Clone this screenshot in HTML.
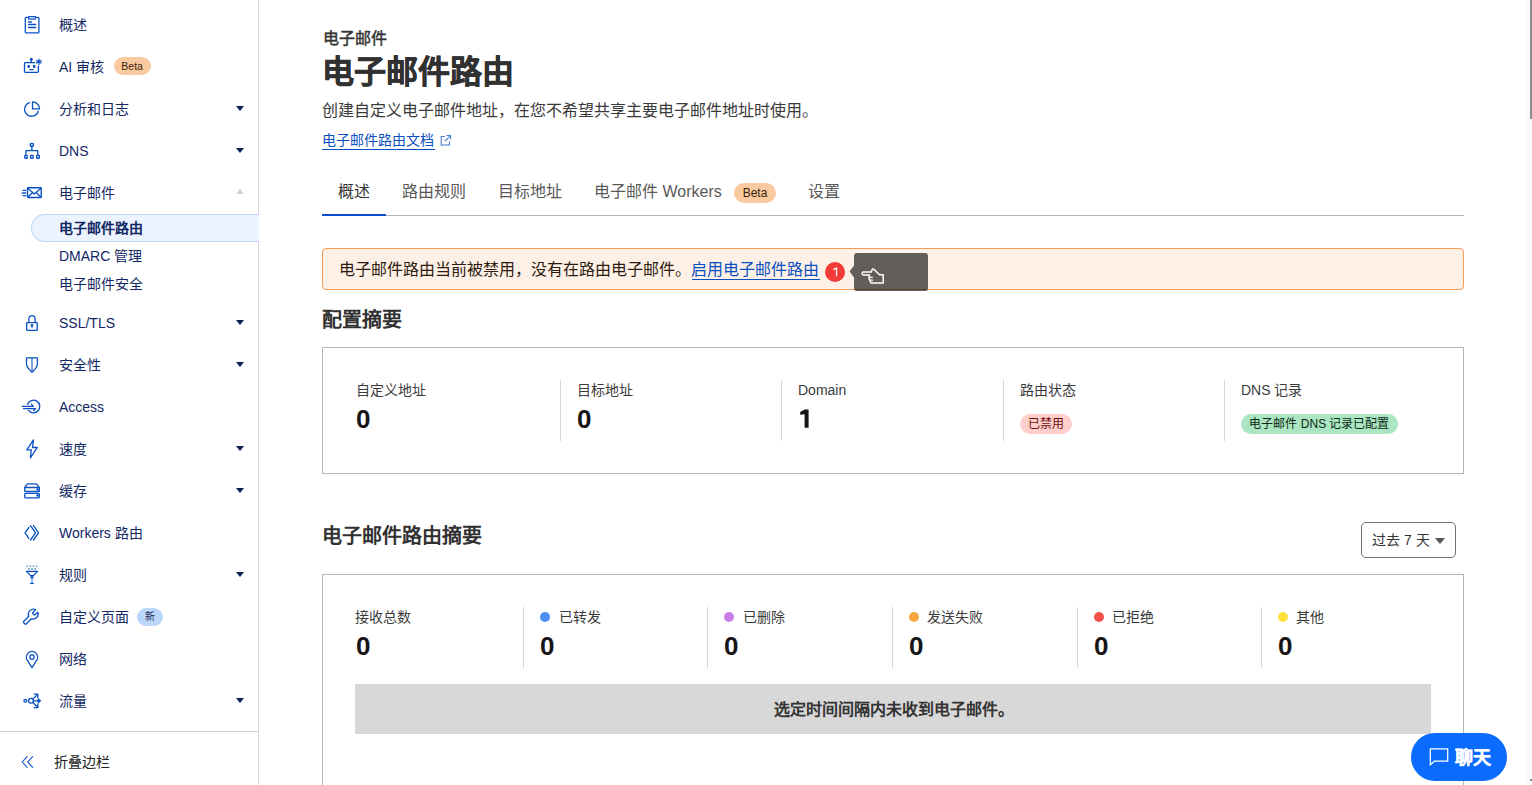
<!DOCTYPE html>
<html lang="zh-CN">
<head>
<meta charset="utf-8">
<style>
*{box-sizing:border-box;margin:0;padding:0}
html,body{width:1532px;height:785px;overflow:hidden;background:#fff}
body{font-family:"Liberation Sans",sans-serif;color:#313131;position:relative}
.abs{position:absolute}
#sb{position:absolute;left:0;top:0;width:259px;height:785px;border-right:1px solid #d9d9d9;background:#fff}
.it{position:absolute;left:0;width:258px;height:28px;line-height:28px;font-size:14px;color:#112863}
.it .ic{position:absolute;left:23px;top:5px;width:18px;height:18px}
.it .tx{position:absolute;left:59px;top:1px;white-space:nowrap}
.it .car{position:absolute;left:236px;top:12px;width:0;height:0;border-left:4.5px solid transparent;border-right:4.5px solid transparent;border-top:5px solid #0e2050}
.sub{position:absolute;left:59px;font-size:14px;color:#112863;line-height:30px;height:28px;white-space:nowrap}
.badge{display:inline-block;font-size:10.5px;line-height:18px;height:18px;padding:0 8px;border-radius:9px;vertical-align:2px;margin-left:8px;text-align:center}
#main{position:absolute;left:259px;top:0;width:1268px;height:785px}

.t{position:absolute;white-space:nowrap;line-height:1}
.tab{position:absolute;top:184px;font-size:16px;color:#595959;white-space:nowrap;line-height:16px}
.box{position:absolute;left:322px;width:1142px;border:1px solid #b6b6b6;background:#fff}
.lbl{position:absolute;font-size:14px;color:#3b3b3b;white-space:nowrap;line-height:14px}
.val{position:absolute;font-size:26px;font-weight:bold;color:#151515;line-height:26px}
.dv{position:absolute;width:1px;background:#d6d6d6}
.dot{position:absolute;width:10px;height:10px;border-radius:50%}
</style>
</head>
<body>
<div id="sb">
<svg class="abs" style="left:0;top:0" width="60" height="785" viewBox="0 0 60 785" fill="none" stroke="#0a52c4" stroke-width="1.3" stroke-linecap="round" stroke-linejoin="round">
<g transform="translate(18,7)">
 <path d="M10.4 10.3H8.2a0.9 0.9 0 0 0-0.9 0.9V25a0.9 0.9 0 0 0 0.9 0.9H20a0.9 0.9 0 0 0 0.9-0.9V11.2a0.9 0.9 0 0 0-0.9-0.9H17.7"/>
 <rect x="10.6" y="9.6" width="6.9" height="2.5" rx="0.6"/>
 <path d="M10.6 15.1H13.4M10.6 17.6H17.6M10.6 20.4H17.6" stroke-width="1.5"/>
</g>
<g transform="translate(18,50)">
 <path d="M16.6 12.6H7.3a0.8 0.8 0 0 0-0.8 0.8V21.6a0.8 0.8 0 0 0 0.8 0.8H19.6a0.8 0.8 0 0 0 0.8-0.8V16.2"/>
 <path d="M13.3 9.8V12.4"/><circle cx="13.3" cy="9.2" r="0.9" fill="#0a52c4"/>
 <circle cx="10.7" cy="16.5" r="0.8" fill="#0a52c4"/><circle cx="16.2" cy="16.5" r="0.8" fill="#0a52c4"/>
 <path d="M11.8 19.6H15.2" stroke-width="1.2"/>
 <path d="M20.9 9.2V14.4M18.6 10.6L23.2 13M18.6 13L23.2 10.6" stroke-width="1.2"/>
</g>
<g transform="translate(18,92)">
 <path d="M11.6 10.7A6.9 6.9 0 1 0 20.2 19.2"/>
 <path d="M14.5 9.9V16.9H21.5A7 7 0 0 0 14.5 9.9Z"/>
</g>
<g transform="translate(18,135)">
 <rect x="12.3" y="8.65" width="3.1" height="2.6" rx="0.4"/>
 <path d="M13.85 11.3V15.7M7.9 19.6V15.7H19.8V19.6"/>
 <rect x="6.75" y="20.35" width="2.5" height="2.9" rx="0.4"/>
 <rect x="12.5" y="20.35" width="2.7" height="2.9" rx="0.4"/>
 <rect x="18.65" y="20.35" width="2.7" height="2.9" rx="0.4"/>
</g>
<g transform="translate(18,177)">
 <rect x="9.5" y="10.8" width="13.7" height="9.7" rx="0.4" stroke-width="1.4"/>
 <path d="M9.8 11.2L16.3 17L22.9 11.2M9.8 20.2L14 16M22.9 20.2L18.7 16"/>
 <path d="M5.1 13.4H7.6M4.3 16H7.6M5.1 18.6H7.6"/>
</g>
<g transform="translate(18,307)">
 <rect x="8.65" y="15.55" width="10.6" height="7.9" rx="0.5"/>
 <path d="M10.8 15.3V11.8a3.15 3.15 0 0 1 6.3 0V15.3"/>
 <circle cx="14" cy="18.4" r="0.7" fill="#0a52c4"/><path d="M14 18.6V20.6" stroke-opacity="0.7"/>
</g>
<g transform="translate(18,349)">
 <path d="M8.5 8.8H19.4V14.6C19.4 18 17 20.8 14 23.2C11 20.8 8.5 18 8.5 14.6Z"/>
 <path d="M14 8.8V23" stroke-opacity="0.8"/>
</g>
<g transform="translate(18,391)">
 <path d="M9.6 13.3A6.3 6.3 0 1 1 10.4 19.2"/>
 <path d="M4.3 15.4H15.2L13.5 13.3M5.5 17.6H17.6L15.6 19.5"/>
</g>
<g transform="translate(18,433)">
 <path d="M15.5 6.8L8.8 16.8H13.3L12.4 24.9L19.3 14.5H14.5Z"/>
</g>
<g transform="translate(18,475)">
 <path d="M6.75 12.5L9.4 8.85H18.4L21.3 12.5"/>
 <rect x="6.75" y="12.5" width="14.6" height="4" rx="0.6"/>
 <rect x="6.75" y="18.3" width="14.6" height="4.6" rx="0.9"/>
 <circle cx="19.5" cy="14.5" r="0.6" fill="#0a52c4"/><circle cx="19.5" cy="20.5" r="0.6" fill="#0a52c4"/>
</g>
<g transform="translate(18,517)">
 <path d="M10.9 10.5L7 15.8L10.9 21.3M12.5 8.6L17.6 15.8L12.5 23M15.5 8.6L20.6 15.8L15.5 23"/>
</g>
<g transform="translate(18,559)">
 <path d="M9.2 7.1h0.1M12.3 7.1h0.1M15.5 7.1h0.1M18.7 7.1h0.1" stroke-width="1.4"/>
 <path d="M10.9 9.4V10.6M14 9.4V10.6M17.2 9.4V10.6" stroke-width="1.7" stroke-linecap="butt"/>
 <path d="M8.4 12.4H19.6L15.4 16.6H12.6Z"/><rect x="12.5" y="16.4" width="3" height="3.2" fill="#0a52c4" stroke="none" opacity="0.85"/>
 <path d="M14 19.5V23.6" stroke-opacity="0.6"/><path d="M12.6 24.3H15.3" stroke-width="1.3"/>
</g>
<g transform="translate(18,601)">
 <path d="M17.6 8.6A5.1 5.1 0 0 0 10.8 15.3L5.6 20.5a0.8 0.8 0 0 0 0 1.1L7 23a0.8 0.8 0 0 0 1.1 0L13.3 17.8A5.1 5.1 0 0 0 19.8 11.2L16.6 14.1L14.5 12Z"/>
</g>
<g transform="translate(18,643)">
 <path d="M14 24.6L9.4 17.3A5.6 5.6 0 1 1 18.6 17.3Z"/>
 <circle cx="14" cy="14" r="2.2"/>
</g>
<g transform="translate(18,685)">
 <circle cx="7.3" cy="15.8" r="1.4"/>
 <circle cx="13" cy="15.8" r="2.4"/>
 <path d="M15.4 15.8H20.8"/>
 <path d="M20.2 13.9L22.4 15.8L20.2 17.7Z" fill="#0a52c4"/>
 <path d="M15.2 13.8L19.4 9.6M16.2 9.2H19.8V12.6M15.2 17.8L19.4 22M16.2 22.6H19.8V19.2"/>
</g>
<g transform="translate(0,0)">
 <path d="M27.1 756.6L22.2 762L27.1 767.4M32.6 756.6L27.7 762L32.6 767.4" stroke-width="1.1"/>
</g>
</svg>
  <div class="it" style="top:10px"><span class="tx">概述</span></div>
  <div class="it" style="top:52px"><span class="tx">AI 审核<span class="badge" style="background:#f9c9a0;color:#3a1f0a;width:37px;padding:0;margin-left:9.5px">Beta</span></span></div>
  <div class="it" style="top:94px"><span class="tx">分析和日志</span><i class="car"></i></div>
  <div class="it" style="top:136px"><span class="tx">DNS</span><i class="car"></i></div>
  <div class="it" style="top:178px"><span class="tx">电子邮件</span><i class="car" style="border-top:0;border-bottom:5px solid #c9d3e3;top:11px"></i></div>
  <div class="abs" style="left:31px;top:214px;width:228px;height:28px;background:#ebf3fe;border:1px solid #b9d7fb;border-right:0;border-radius:14px 0 0 14px"></div>
  <div class="sub" style="top:213px;font-weight:bold">电子邮件路由</div>
  <div class="sub" style="top:241px">DMARC 管理</div>
  <div class="sub" style="top:269px">电子邮件安全</div>
  <div class="it" style="top:308px"><span class="tx">SSL/TLS</span><i class="car"></i></div>
  <div class="it" style="top:350px"><span class="tx">安全性</span><i class="car"></i></div>
  <div class="it" style="top:392px"><span class="tx">Access</span></div>
  <div class="it" style="top:434px"><span class="tx">速度</span><i class="car"></i></div>
  <div class="it" style="top:476px"><span class="tx">缓存</span><i class="car"></i></div>
  <div class="it" style="top:518px"><span class="tx">Workers 路由</span></div>
  <div class="it" style="top:560px"><span class="tx">规则</span><i class="car"></i></div>
  <div class="it" style="top:602px"><span class="tx">自定义页面<span class="badge" style="background:#bcd6fb;color:#1d2a52;width:26px;padding:0;font-size:10px;margin-left:7.5px">新</span></span></div>
  <div class="it" style="top:644px"><span class="tx">网络</span></div>
  <div class="it" style="top:686px"><span class="tx">流量</span><i class="car"></i></div>
  <div class="abs" style="left:0;top:731px;width:258px;height:1px;background:#d0d0d0"></div>
  <div class="it" style="top:747px"><span class="tx" style="left:54px;color:#222">折叠边栏</span></div>
</div>
<div id="mainc">
<div class="t" style="left:323px;top:31px;font-size:16px;font-weight:500;color:#333;-webkit-text-stroke:0.45px #333">电子邮件</div>
<div class="t" style="left:322px;top:56px;font-size:32px;font-weight:bold;color:#313131;-webkit-text-stroke:0.6px #313131">电子邮件路由</div>
<div class="t" style="left:322px;top:103px;font-size:16px;color:#3a3a3a">创建自定义电子邮件地址，在您不希望共享主要电子邮件地址时使用。</div>
<div class="t" style="left:322px;top:133px;font-size:14px;color:#0a4fc0;line-height:14px">电子邮件路由文档</div>
<div class="abs" style="left:322px;top:149px;width:113px;height:1px;background:#0a4fc0"></div>
<svg class="abs" style="left:439px;top:134px" width="13" height="13" viewBox="0 0 13 13" fill="none" stroke="#4a7fd0" stroke-width="1.1"><path d="M6 2.5H2.2V11H10.5V7.2M7.5 1.5H11.5V5.5M11.2 1.8L6 7"/></svg>

<div class="tab" style="left:338px;color:#333">概述</div>
<div class="tab" style="left:402px">路由规则</div>
<div class="tab" style="left:498px">目标地址</div>
<div class="tab" style="left:594px">电子邮件 Workers</div>
<div class="abs" style="left:734px;top:183px;width:42px;height:20px;border-radius:10px;background:#f9c9a0;color:#3a1f0a;font-size:12px;line-height:20px;text-align:center">Beta</div>
<div class="tab" style="left:808px">设置</div>
<div class="abs" style="left:322px;top:215px;width:1142px;height:1px;background:#b3b3b3"></div>
<div class="abs" style="left:322px;top:214px;width:64px;height:2px;background:#0a4fcf"></div>

<div class="abs" style="left:322px;top:248px;width:1142px;height:42px;border:1px solid #f69c55;border-radius:4px;background:#fdf1e7"></div>
<div class="t" style="left:339px;top:262px;font-size:16px;color:#2e1a0c">电子邮件路由当前被禁用，没有在路由电子邮件。<span style="color:#0a4fc0">启用电子邮件路由</span></div>
<div class="abs" style="left:692px;top:279px;width:128px;height:1px;background:#0a4fc0"></div>
<div class="abs" style="left:825px;top:262px;width:20px;height:20px;border-radius:50%;background:#f23a37"></div><svg class="abs" style="left:825px;top:262px" width="20" height="20" viewBox="0 0 20 20"><path d="M10.9 5.4H12.2V14.2H10.9V7.2L8.3 8.2V6.9Z" fill="#fff"/></svg>
<div class="abs" style="left:854px;top:253px;width:74px;height:38px;border-radius:3px;background:rgba(0,0,0,0.61)"></div>
<svg class="abs" style="left:849px;top:265px" width="5" height="13" viewBox="0 0 5 13"><path d="M5 0.5L0.6 6.5L5 12.5Z" fill="rgba(0,0,0,0.61)"/></svg>
<svg class="abs" style="left:855px;top:260px" width="40" height="30" viewBox="0 0 40 30" fill="none" stroke="#fff" stroke-width="1.5" stroke-linejoin="round" stroke-linecap="round"><path d="M16.3 12.1H8.5a1.4 1.4 0 0 0 0 2.8H14.5L14 18.4L15.7 22.5L16.5 23.1H28.2V14.8H24.5L18.9 9.3a1.1 1.1 0 0 0-1.7 0.2Z"/><path d="M14.6 17.3H17.3M15.5 20.2H17.5" stroke-width="1.2"/></svg>

<div class="t" style="left:322px;top:310px;font-size:20px;font-weight:bold;color:#313131">配置摘要</div>
<div class="box" style="top:347px;height:127px"></div>
<div class="lbl" style="left:356px;top:383px">自定义地址</div>
<div class="val" style="left:356px;top:406px">0</div>
<div class="dv" style="left:560px;top:380px;height:61px"></div>
<div class="lbl" style="left:577px;top:383px">目标地址</div>
<div class="val" style="left:577px;top:406px">0</div>
<div class="dv" style="left:781px;top:380px;height:61px"></div>
<div class="lbl" style="left:798px;top:383px">Domain</div>
<svg class="abs" style="left:795px;top:405px" width="20" height="27" viewBox="0 0 20 27"><path d="M9.6 4.5H13.6V22.7H9.6V9.2L5.2 9.7V6.9L9.3 4.7Z" fill="#151515"/></svg>
<div class="dv" style="left:1003px;top:380px;height:61px"></div>
<div class="lbl" style="left:1020px;top:383px">路由状态</div>
<div class="abs" style="left:1020px;top:414px;width:52px;height:20px;border-radius:10px;background:#fecfcb;color:#6b0e0e;font-size:12px;line-height:20px;text-align:center">已禁用</div>
<div class="dv" style="left:1224px;top:380px;height:61px"></div>
<div class="lbl" style="left:1241px;top:383px">DNS 记录</div>
<div class="abs" style="left:1241px;top:414px;width:157px;height:20px;border-radius:10px;background:#abe5c1;color:#0c2a17;font-size:12px;line-height:20px;text-align:center;white-space:nowrap">电子邮件 DNS 记录已配置</div>

<div class="t" style="left:322px;top:526px;font-size:20px;font-weight:bold;color:#313131">电子邮件路由摘要</div>
<div class="abs" style="left:1361px;top:522px;width:95px;height:36px;border:1px solid #707070;border-radius:5px;background:#fff"></div>
<div class="t" style="left:1372px;top:533px;font-size:14px;color:#333">过去 7 天</div>
<div class="abs" style="left:1435px;top:538px;width:0;height:0;border-left:5px solid transparent;border-right:5px solid transparent;border-top:6px solid #555"></div>

<div class="box" style="top:574px;height:230px"></div>
<div class="lbl" style="left:355px;top:610px">接收总数</div>
<div class="val" style="left:356px;top:633px">0</div>
<div class="dv" style="left:523px;top:607px;height:61px"></div>
<div class="dot" style="left:540px;top:612px;background:#4b8ff5"></div>
<div class="lbl" style="left:559px;top:610px">已转发</div>
<div class="val" style="left:540px;top:633px">0</div>
<div class="dv" style="left:707px;top:607px;height:61px"></div>
<div class="dot" style="left:724px;top:612px;background:#c87ee8"></div>
<div class="lbl" style="left:743px;top:610px">已删除</div>
<div class="val" style="left:724px;top:633px">0</div>
<div class="dv" style="left:892px;top:607px;height:61px"></div>
<div class="dot" style="left:909px;top:612px;background:#f6a540"></div>
<div class="lbl" style="left:927px;top:610px">发送失败</div>
<div class="val" style="left:909px;top:633px">0</div>
<div class="dv" style="left:1077px;top:607px;height:61px"></div>
<div class="dot" style="left:1094px;top:612px;background:#f4524a"></div>
<div class="lbl" style="left:1112px;top:610px">已拒绝</div>
<div class="val" style="left:1094px;top:633px">0</div>
<div class="dv" style="left:1261px;top:607px;height:61px"></div>
<div class="dot" style="left:1278px;top:612px;background:#fde03b"></div>
<div class="lbl" style="left:1296px;top:610px">其他</div>
<div class="val" style="left:1278px;top:633px">0</div>
<div class="abs" style="left:355px;top:684px;width:1076px;height:50px;background:#d8d8d8"></div>
<div class="t" style="left:774px;top:702px;font-size:16px;font-weight:bold;color:#333">选定时间间隔内未收到电子邮件。</div>

<div class="abs" style="left:1411px;top:733px;width:96px;height:48px;border-radius:24px;background:#0a6cff"></div>
<svg class="abs" style="left:1428px;top:747px" width="22" height="21" viewBox="0 0 22 21" fill="none" stroke="#fff" stroke-width="1.25" stroke-linejoin="miter"><path d="M2.3 1.9H19.7V14.1H6.3L2.3 17.9Z"/></svg>
<div class="t" style="left:1455px;top:749px;font-size:18px;font-weight:bold;color:#fff;-webkit-text-stroke:0.3px #fff">聊天</div>

<div class="abs" style="left:1527px;top:0;width:5px;height:785px;background:#fafafa"></div>
<div class="abs" style="left:1530px;top:0;width:2px;height:119px;background:#8c8c8c"></div>
<div class="abs" style="left:1530px;top:779px;width:2px;height:2px;background:#8a8a8a"></div>
</div>

</body>
</html>
